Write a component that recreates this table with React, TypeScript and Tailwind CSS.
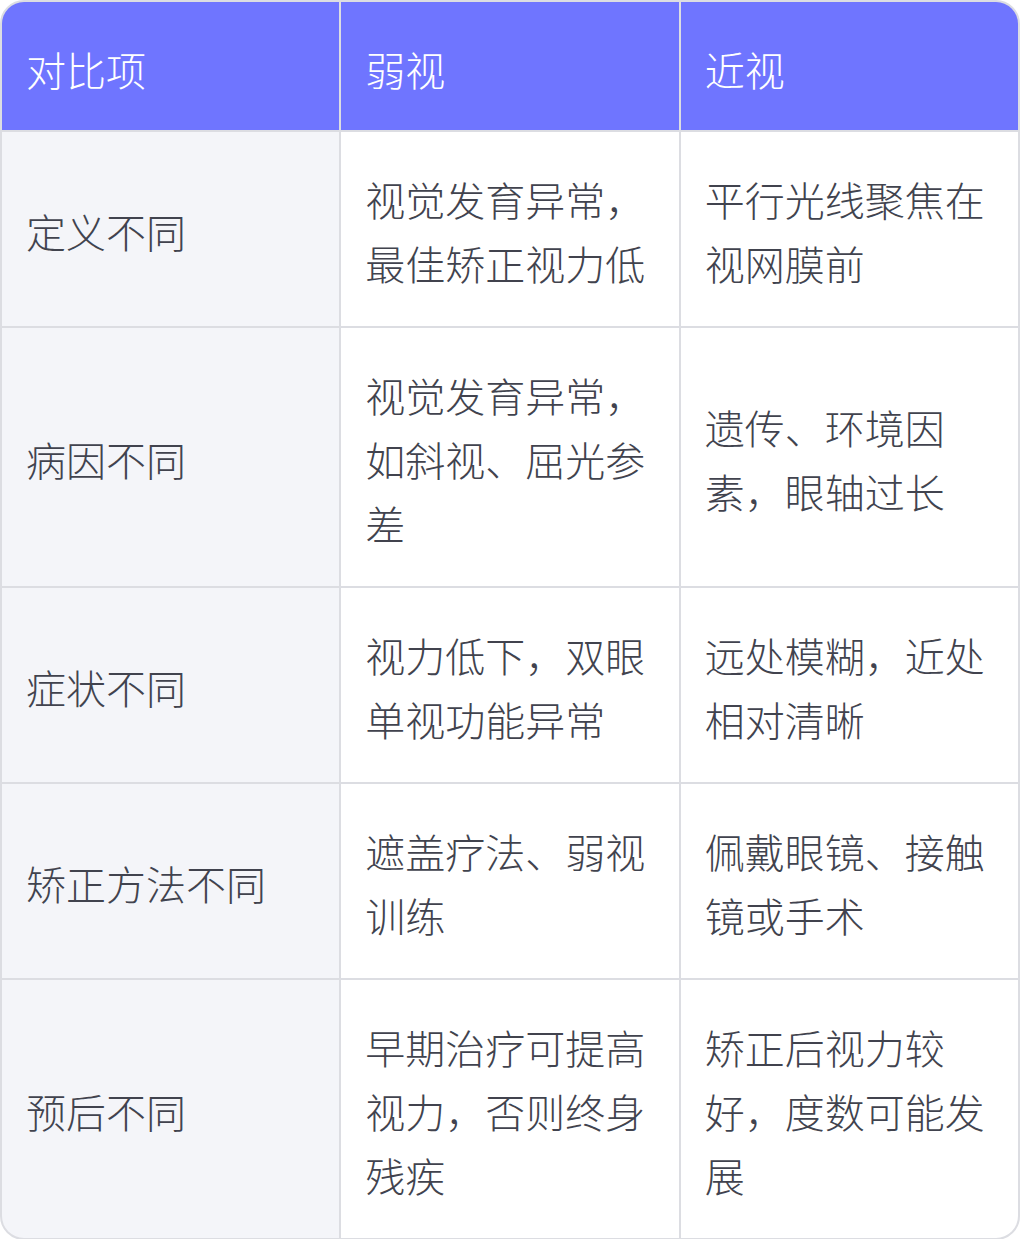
import React from "react";

const rows: { label: string; a: string; b: string }[] = [
  { label: "定义不同", a: "视觉发育异常，最佳矫正视力低", b: "平行光线聚焦在视网膜前" },
  { label: "病因不同", a: "视觉发育异常，如斜视、屈光参差", b: "遗传、环境因素，眼轴过长" },
  { label: "症状不同", a: "视力低下，双眼单视功能异常", b: "远处模糊，近处相对清晰" },
  { label: "矫正方法不同", a: "遮盖疗法、弱视训练", b: "佩戴眼镜、接触镜或手术" },
  { label: "预后不同", a: "早期治疗可提高视力，否则终身残疾", b: "矫正后视力较好，度数可能发展" },
];

export default function App() {
  return (
    <div
      className="w-[1020px] h-[1239px] bg-white"
      style={{ fontFamily: '"Noto Sans CJK SC", "Noto Sans", sans-serif' }}
    >
      <div className="w-[1020px] rounded-[24px] border-2 border-[#dcdde2] overflow-hidden bg-[#dcdde2]">
        <div className="grid grid-cols-3 gap-[2px] text-[40px] leading-[64px] font-light">
          <div className="bg-[#6f75ff] text-white px-6 pt-[35px] pb-[29px]">对比项</div>
          <div className="bg-[#6f75ff] text-white px-6 pt-[35px] pb-[29px]">弱视</div>
          <div className="bg-[#6f75ff] text-white px-6 pt-[35px] pb-[29px]">近视</div>
          {rows.map((r) => (
            <React.Fragment key={r.label}>
              <div className="bg-[#f4f5f9] text-[#41434e] pl-6 pr-6 pt-[35px] pb-[31px] flex items-center">
                {r.label}
              </div>
              <div className="bg-white text-[#41434e] pl-6 pr-[30px] pt-[35px] pb-[31px] flex items-center">
                {r.a}
              </div>
              <div className="bg-white text-[#41434e] pl-6 pr-[28px] pt-[35px] pb-[31px] flex items-center">
                {r.b}
              </div>
            </React.Fragment>
          ))}
        </div>
      </div>
    </div>
  );
}
